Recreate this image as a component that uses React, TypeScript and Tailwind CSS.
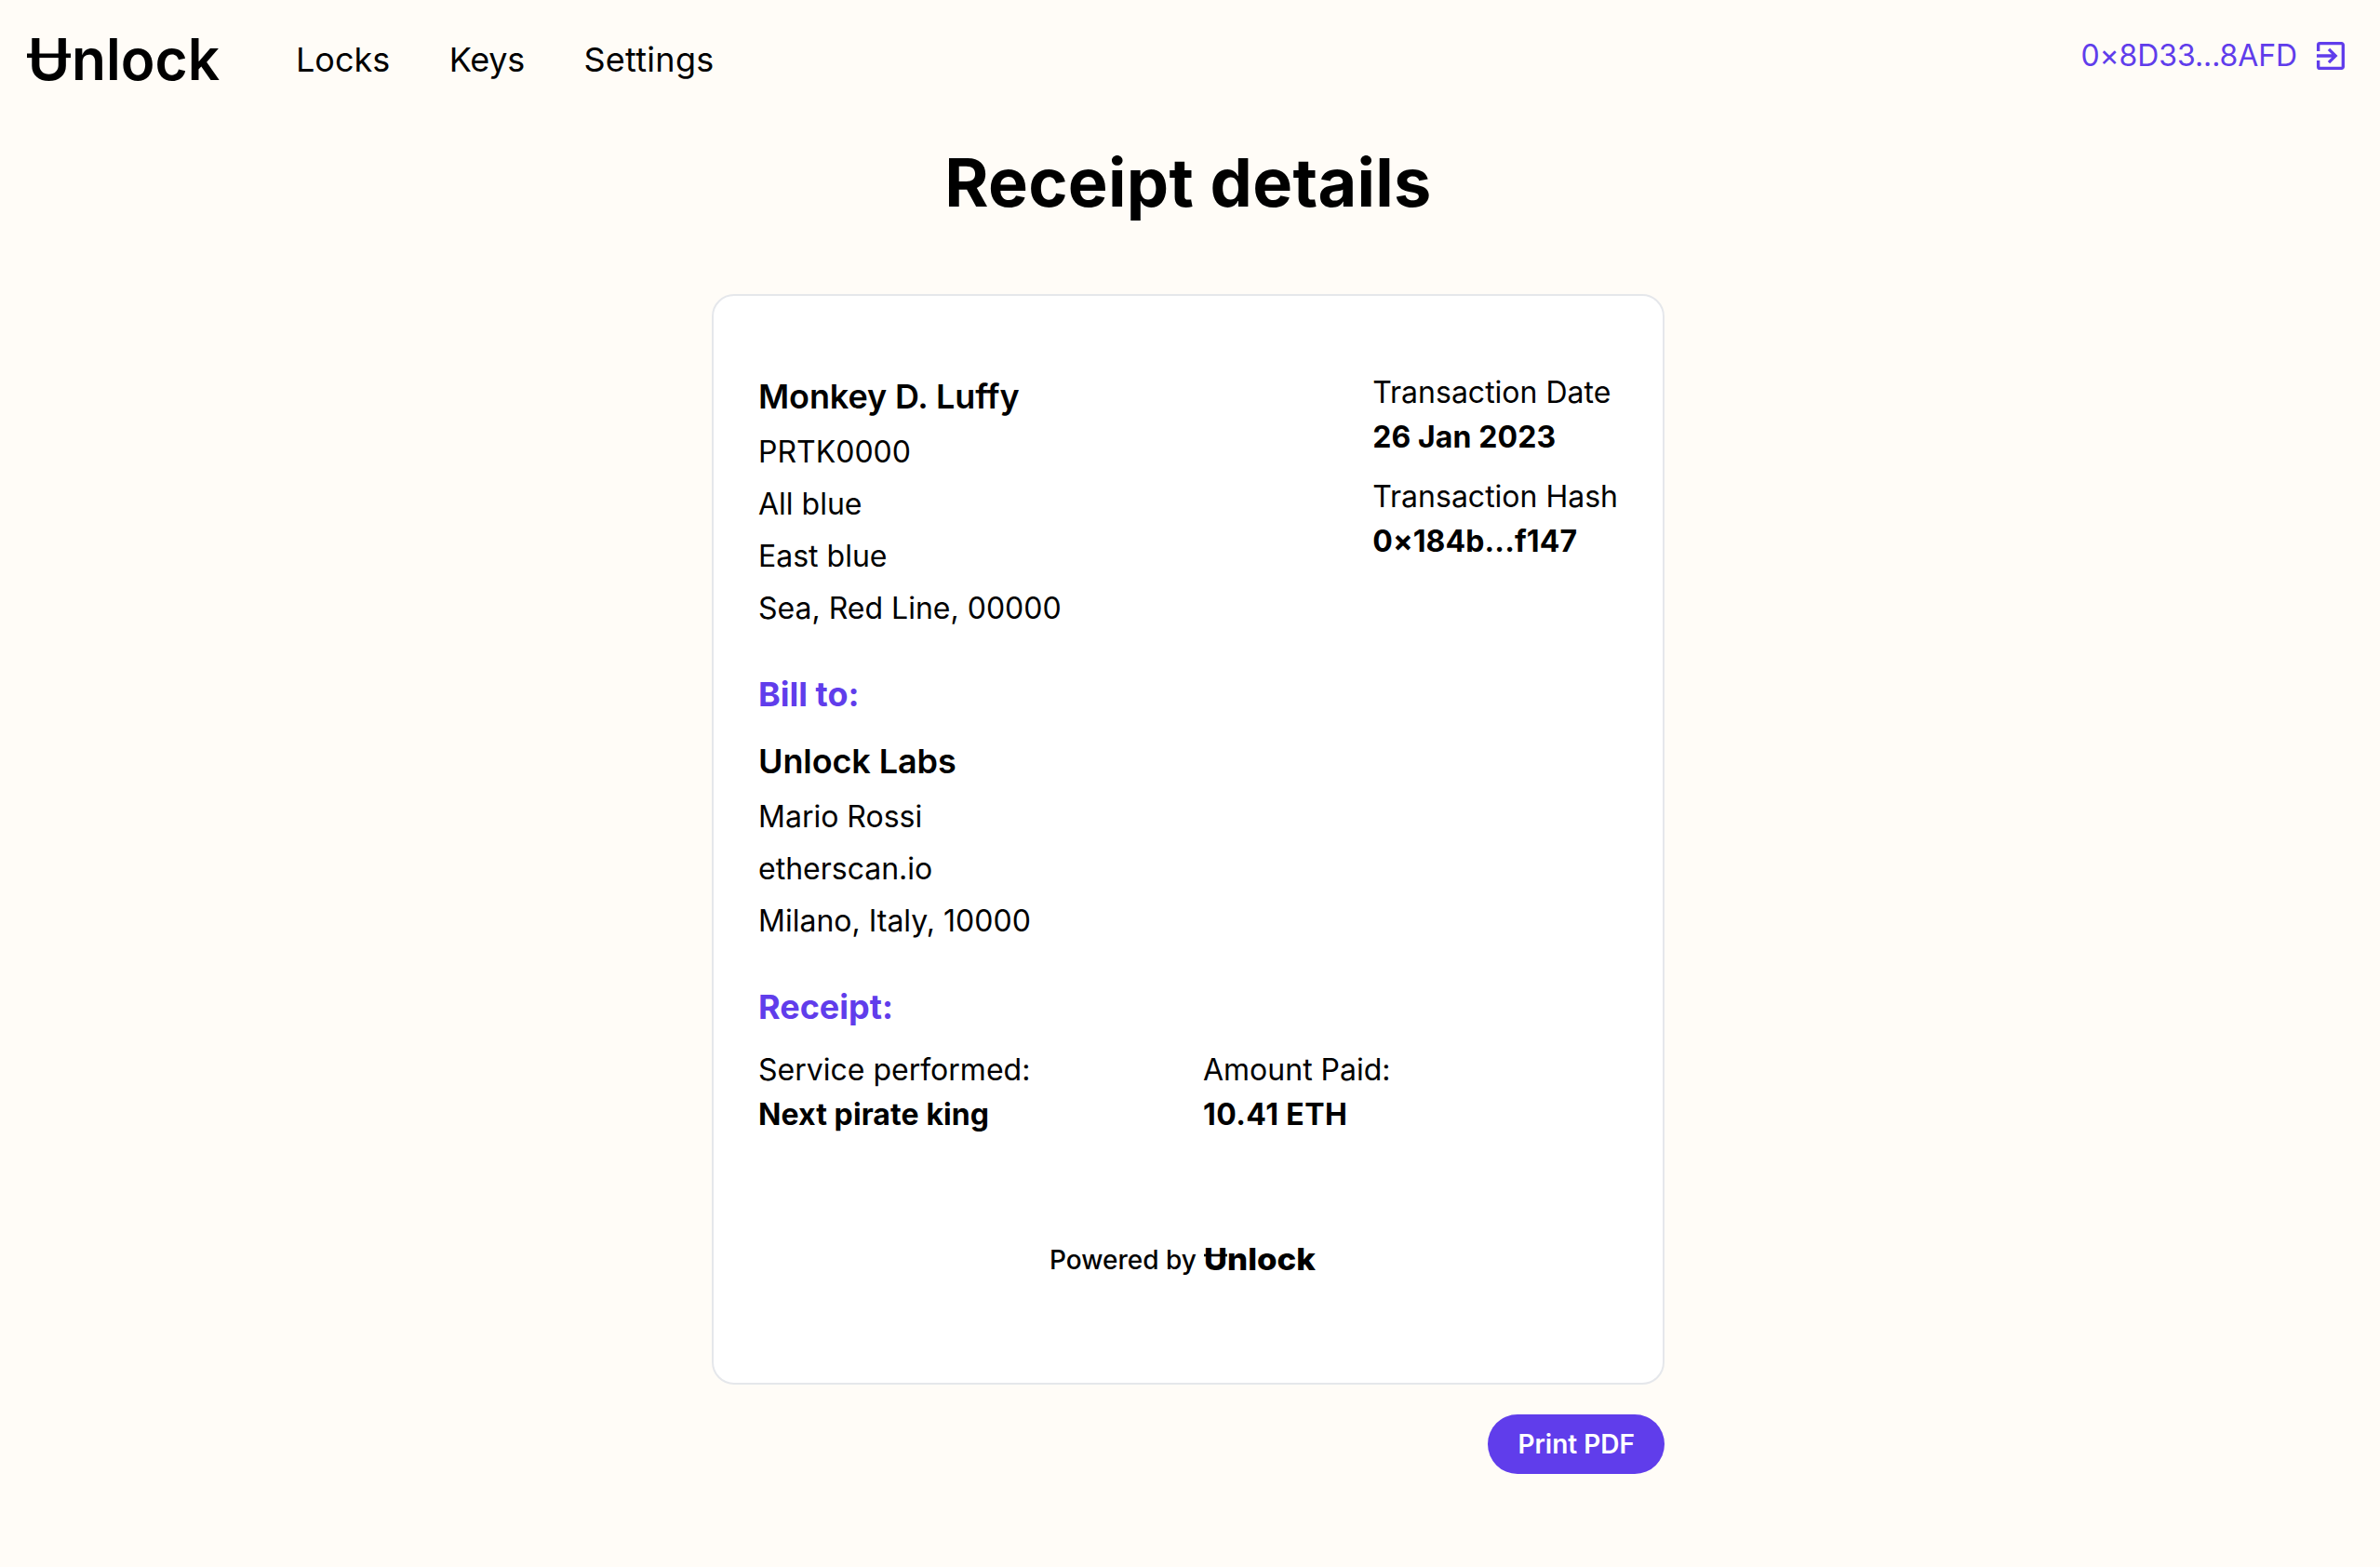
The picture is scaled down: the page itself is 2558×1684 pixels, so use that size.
import { MdExitToApp } from "react-icons/md";

const seller = ["PRTK0000", "All blue", "East blue", "Sea, Red Line, 00000"];
const buyer = ["Mario Rossi", "etherscan.io", "Milano, Italy, 10000"];

function Field({ label, value }: { label: string; value: string }) {
  return (
    <div className="flex flex-col">
      <span>{label}</span>
      <span className="font-bold tracking-[0.1px]">{value}</span>
    </div>
  );
}

function Party({ name, lines }: { name: string; lines: string[] }) {
  return (
    <div className="flex flex-col gap-2">
      <span className="text-[36px] leading-[56px] font-semibold tracking-[-0.1px]">{name}</span>
      {lines.map((line) => (
        <span key={line}>{line}</span>
      ))}
    </div>
  );
}

function Logo() {
  return (
    <svg width="216" height="80" viewBox="0 0 216 80" className="overflow-visible text-[62px] font-semibold">
      <text x="1.8" y="62.3">U</text>
      <text x="49" y="62.3" textLength="159" lengthAdjust="spacingAndGlyphs">nlock</text>
      <rect x="1" y="33.5" width="47" height="4.6" />
    </svg>
  );
}

function SmallLogo() {
  return (
    <svg width="132" height="48" viewBox="0 0 132 48" className="overflow-visible text-[33px] font-extrabold">
      <text x="0" y="35.3" textLength="25" lengthAdjust="spacingAndGlyphs">U</text>
      <text x="25" y="35.3" textLength="95" lengthAdjust="spacingAndGlyphs">nlock</text>
      <rect x="0" y="17.7" width="25" height="2.6" />
    </svg>
  );
}

export default function App() {
  return (
    <div className="h-[1684px] w-[2558px] overflow-hidden bg-[#fffcf7] font-['Inter',sans-serif] text-[32px] leading-[48px] text-black">
      <header className="flex h-32 items-center justify-between pr-[33px] pl-7">
        <div className="flex items-center">
          <Logo />
          <nav className="ml-[74px] flex gap-[63.5px] text-[36px] leading-[56px]">
            <a>Locks</a>
            <a className="tracking-[-0.3px]">Keys</a>
            <a className="tracking-[0.3px]">Settings</a>
          </nav>
        </div>
        <div className="flex items-center gap-4 pb-2 text-[#603deb]">
          <span className="tracking-[-0.1px]">0×8D33...8AFD</span>
          <MdExitToApp size={40} />
        </div>
      </header>
      <div className="pr-1">
        <main className="mx-auto flex w-[1024px] flex-col">
          <h1 className="mt-7 text-center text-[72px] leading-[80px] font-bold tracking-[0.3px]">Receipt details</h1>
          <section className="mt-20 flex h-[1172px] flex-col rounded-[24px] border-2 border-[#e5e7eb] bg-white px-12 pt-20">
            <div className="flex justify-between">
              <Party name="Monkey D. Luffy" lines={seller} />
              <div className="flex flex-col gap-4">
                <Field label="Transaction Date" value="26 Jan 2023" />
                <Field label="Transaction Hash" value="0×184b...f147" />
              </div>
            </div>
            <h2 className="mt-10 mb-4 text-[36px] leading-[56px] font-bold text-[#603deb]">Bill to:</h2>
            <Party name="Unlock Labs" lines={buyer} />
            <h2 className="mt-10 mb-4 text-[36px] leading-[56px] font-bold text-[#603deb]">Receipt:</h2>
            <div className="grid grid-cols-2 gap-8">
              <Field label="Service performed:" value="Next pirate king" />
              <div className="flex flex-col">
                <span>Amount Paid:</span>
                <span className="font-bold tracking-[0.4px]">10.41 ETH</span>
              </div>
            </div>
            <div className="mt-[108px] flex items-center justify-center gap-2">
              <span className="text-[28px] font-medium">Powered by</span>
              <SmallLogo />
            </div>
          </section>
          <button className="mt-8 h-16 self-end rounded-full bg-[#603deb] px-8 text-[28px] leading-[40px] font-semibold text-white">
            Print PDF
          </button>
        </main>
      </div>
    </div>
  );
}
